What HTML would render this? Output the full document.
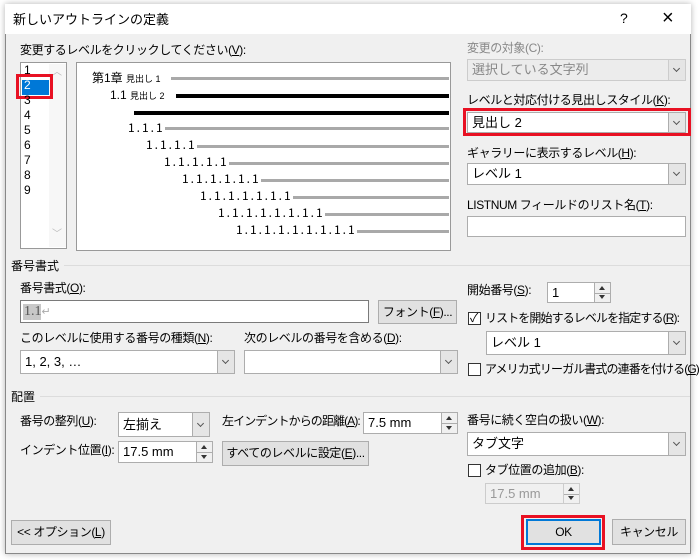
<!DOCTYPE html>
<html><head><meta charset="utf-8"><style>
*{box-sizing:border-box;margin:0;padding:0}
body{width:700px;height:560px;position:relative;overflow:hidden;background:#fff;font-family:"Liberation Sans","Noto Sans CJK JP",sans-serif;font-size:12px;line-height:14px;color:#000}
.a{position:absolute;white-space:nowrap}
.l{letter-spacing:-0.4px}
.t{letter-spacing:-0.9px}
.dlg{position:absolute;left:5px;top:4px;width:686px;height:550px;background:#f0f0f0;border:1px solid #888;box-shadow:0 0 6px rgba(0,0,0,.3)}
.title{position:absolute;left:5px;top:4px;width:686px;height:30px;background:#fff}
.box{position:absolute;background:#fff;border:1px solid #7a7a7a}
.cmb{position:absolute;background:#fff;border:1px solid #adadad}
.cmb .dd{position:absolute;right:0;top:0;bottom:0;width:17px;background:#e5e5e5;border-left:1px solid #adadad}
.cmb .dd:after{content:"";position:absolute;left:5px;top:50%;margin-top:-4px;width:4px;height:4px;border-right:1px solid #555;border-bottom:1px solid #555;transform:rotate(45deg)}
.cmb span{position:absolute;left:4px;top:50%;transform:translateY(-50%);font-size:13px;line-height:16px}
.btn{position:absolute;background:#e1e1e1;border:1px solid #adadad;text-align:center;font-size:12px;letter-spacing:-0.4px}
.spin{position:absolute;right:0;top:0;bottom:0;width:16px;background:#f0f0f0;border-left:1px solid #adadad}
.spin:before{content:"";position:absolute;left:4px;top:3px;border:3.5px solid transparent;border-bottom:4px solid #333;border-top:0}
.spin:after{content:"";position:absolute;left:4px;bottom:3px;border:3.5px solid transparent;border-top:4px solid #333;border-bottom:0}
.spin i{position:absolute;left:0;right:0;top:50%;border-top:1px solid #adadad}
.gl{position:absolute;height:3px;background:#a9a9a9;right:251px}
.bl{position:absolute;height:4px;background:#000;right:251px}
.sep{position:absolute;height:1px;background:#dcdcdc}
.chk{position:absolute;width:13px;height:13px;border:1px solid #333;background:#fff}
u{text-decoration:underline}
.pv{position:absolute;font-family:"Noto Sans CJK JP",sans-serif;font-size:12px;letter-spacing:2px;line-height:12px}
</style></head><body>
<div class="dlg"></div>
<div class="title"></div>
<div class="a" style="left:13px;top:12px;font-size:13px;line-height:16px">新しいアウトラインの定義</div>
<div class="a" style="left:620px;top:11px;font-size:14px">?</div>
<div class="a" style="left:662px;top:8px;font-size:20px;line-height:20px;font-weight:300">×</div>

<div class="a l" style="left:20px;top:43px">変更するレベルをクリックしてください(<u>V</u>):</div>
<div class="box" style="left:20px;top:62px;width:47px;height:187px;border-color:#999"></div>
<div class="a" style="left:49px;top:64px;width:17px;height:183px;background:#f7f7f7"></div>
<div class="a" style="left:52px;top:66px;color:#bbb;font-size:10px">︿</div>
<div class="a" style="left:52px;top:228px;color:#bbb;font-size:10px">﹀</div>
<div class="a" style="left:22px;top:80px;width:27px;height:15px;background:#0078d7"></div>
<div class="a" style="left:16px;top:74px;width:37px;height:25px;border:3px solid #e81123"></div>
<div class="a" style="left:24px;top:63px;font-size:12px;line-height:15px">1<br><span style="color:#fff">2</span><br>3<br>4<br>5<br>6<br>7<br>8<br>9</div>

<div class="box" style="left:76px;top:62px;width:375px;height:189px;border-color:#999"></div>
<div class="a" style="left:92px;top:71px;font-size:12px">第1章 <span style="font-size:9px">見出し 1</span></div>
<div class="gl" style="left:171px;top:77px"></div>
<div class="a" style="left:110px;top:88px;font-size:12px">1.1 <span style="font-size:9px">見出し 2</span></div>
<div class="bl" style="left:176px;top:94px"></div>
<div class="bl" style="left:134px;top:111px"></div>
<div class="pv" style="left:128px;top:122px">1.1.1</div><div class="gl" style="left:165px;top:127px"></div>
<div class="pv" style="left:146px;top:139px">1.1.1.1</div><div class="gl" style="left:197px;top:145px"></div>
<div class="pv" style="left:164px;top:156px">1.1.1.1.1</div><div class="gl" style="left:229px;top:162px"></div>
<div class="pv" style="left:182px;top:173px">1.1.1.1.1.1</div><div class="gl" style="left:261px;top:179px"></div>
<div class="pv" style="left:200px;top:190px">1.1.1.1.1.1.1</div><div class="gl" style="left:293px;top:196px"></div>
<div class="pv" style="left:218px;top:207px">1.1.1.1.1.1.1.1</div><div class="gl" style="left:325px;top:213px"></div>
<div class="pv" style="left:236px;top:224px">1.1.1.1.1.1.1.1.1</div><div class="gl" style="left:357px;top:230px"></div>

<div class="a l" style="left:467px;top:41px;color:#888">変更の対象(C):</div>
<div class="cmb" style="left:467px;top:59px;width:219px;height:22px;background:#ececec;border-color:#ccc"><span style="color:#888">選択している文字列</span><div class="dd" style="border-color:#ccc"></div></div>
<div class="a l" style="left:467px;top:93px">レベルと対応付ける見出しスタイル(<u>K</u>):</div>
<div class="a" style="left:463px;top:108px;width:228px;height:28px;border:3px solid #e81123"></div>
<div class="cmb" style="left:467px;top:112px;width:219px;height:21px"><span>見出し 2</span><div class="dd"></div></div>
<div class="a l" style="left:467px;top:146px">ギャラリーに表示するレベル(<u>H</u>):</div>
<div class="cmb" style="left:467px;top:163px;width:219px;height:22px"><span>レベル 1</span><div class="dd"></div></div>
<div class="a l" style="left:467px;top:198px">LISTNUM フィールドのリスト名(<u>T</u>):</div>
<div class="cmb" style="left:467px;top:216px;width:219px;height:21px"></div>

<div class="a" style="left:11px;top:259px">番号書式</div>
<div class="sep" style="left:64px;top:265px;width:626px"></div>
<div class="a l" style="left:20px;top:281px">番号書式(<u>O</u>):</div>
<div class="box" style="left:20px;top:300px;width:349px;height:23px"></div>
<div class="a" style="left:23px;top:304px;width:18px;height:16px;background:#c8c8c8"></div>
<div class="a" style="left:24px;top:304px;font-family:'Liberation Serif',serif;font-size:14px;line-height:16px;color:#555">1.1<span style="color:#aaa;font-size:11px">↵</span></div>
<div class="btn" style="left:378px;top:300px;width:79px;height:24px;line-height:22px">フォント(<u>F</u>)...</div>
<div class="a l" style="left:20px;top:331px">このレベルに使用する番号の種類(<u>N</u>):</div>
<div class="cmb" style="left:20px;top:350px;width:215px;height:24px"><span>1, 2, 3, …</span><div class="dd"></div></div>
<div class="a l" style="left:244px;top:331px">次のレベルの番号を含める(<u>D</u>):</div>
<div class="cmb" style="left:244px;top:350px;width:214px;height:24px"><div class="dd"></div></div>

<div class="a l" style="left:467px;top:283px">開始番号(<u>S</u>):</div>
<div class="cmb" style="left:547px;top:282px;width:64px;height:21px"><span>1</span><div class="spin"><i></i></div></div>
<div class="chk" style="left:468px;top:312px"></div>
<div class="a" style="left:470px;top:311px;font-size:12px">✓</div>
<div class="a t" style="left:485px;top:311px">リストを開始するレベルを指定する(<u>R</u>):</div>
<div class="cmb" style="left:486px;top:331px;width:200px;height:24px"><span>レベル 1</span><div class="dd"></div></div>
<div class="chk" style="left:468px;top:363px"></div>
<div class="a t" style="left:485px;top:362px">アメリカ式リーガル書式の連番を付ける(<u>G</u>)</div>

<div class="a" style="left:11px;top:390px">配置</div>
<div class="sep" style="left:40px;top:396px;width:650px"></div>
<div class="a l" style="left:20px;top:414px">番号の整列(<u>U</u>):</div>
<div class="cmb" style="left:118px;top:412px;width:92px;height:25px"><span>左揃え</span><div class="dd"></div></div>
<div class="a t" style="left:222px;top:414px">左インデントからの距離(<u>A</u>):</div>
<div class="cmb" style="left:363px;top:412px;width:95px;height:22px"><span>7.5 mm</span><div class="spin"><i></i></div></div>
<div class="a l" style="left:20px;top:443px">インデント位置(<u>I</u>):</div>
<div class="cmb" style="left:118px;top:441px;width:95px;height:22px"><span>17.5 mm</span><div class="spin"><i></i></div></div>
<div class="btn" style="left:222px;top:441px;width:147px;height:25px;line-height:23px">すべてのレベルに設定(<u>E</u>)...</div>

<div class="a l" style="left:467px;top:413px">番号に続く空白の扱い(<u>W</u>):</div>
<div class="cmb" style="left:467px;top:432px;width:219px;height:24px"><span>タブ文字</span><div class="dd"></div></div>
<div class="chk" style="left:468px;top:464px"></div>
<div class="a l" style="left:485px;top:463px">タブ位置の追加(<u>B</u>):</div>
<div class="cmb" style="left:485px;top:483px;width:95px;height:21px;background:#f0f0f0;border-color:#ccc"><span style="color:#999">17.5 mm</span><div class="spin" style="border-color:#ccc"><i></i></div></div>

<div class="btn" style="left:11px;top:520px;width:100px;height:25px;line-height:23px">&lt;&lt; オプション(<u>L</u>)</div>
<div class="a" style="left:521px;top:515px;width:84px;height:35px;border:3px solid #e81123"></div>
<div class="btn" style="left:526px;top:519px;width:75px;height:26px;line-height:22px;border:2px solid #0078d7">OK</div>
<div class="btn" style="left:612px;top:519px;width:74px;height:26px;line-height:24px">キャンセル</div>
</body></html>
